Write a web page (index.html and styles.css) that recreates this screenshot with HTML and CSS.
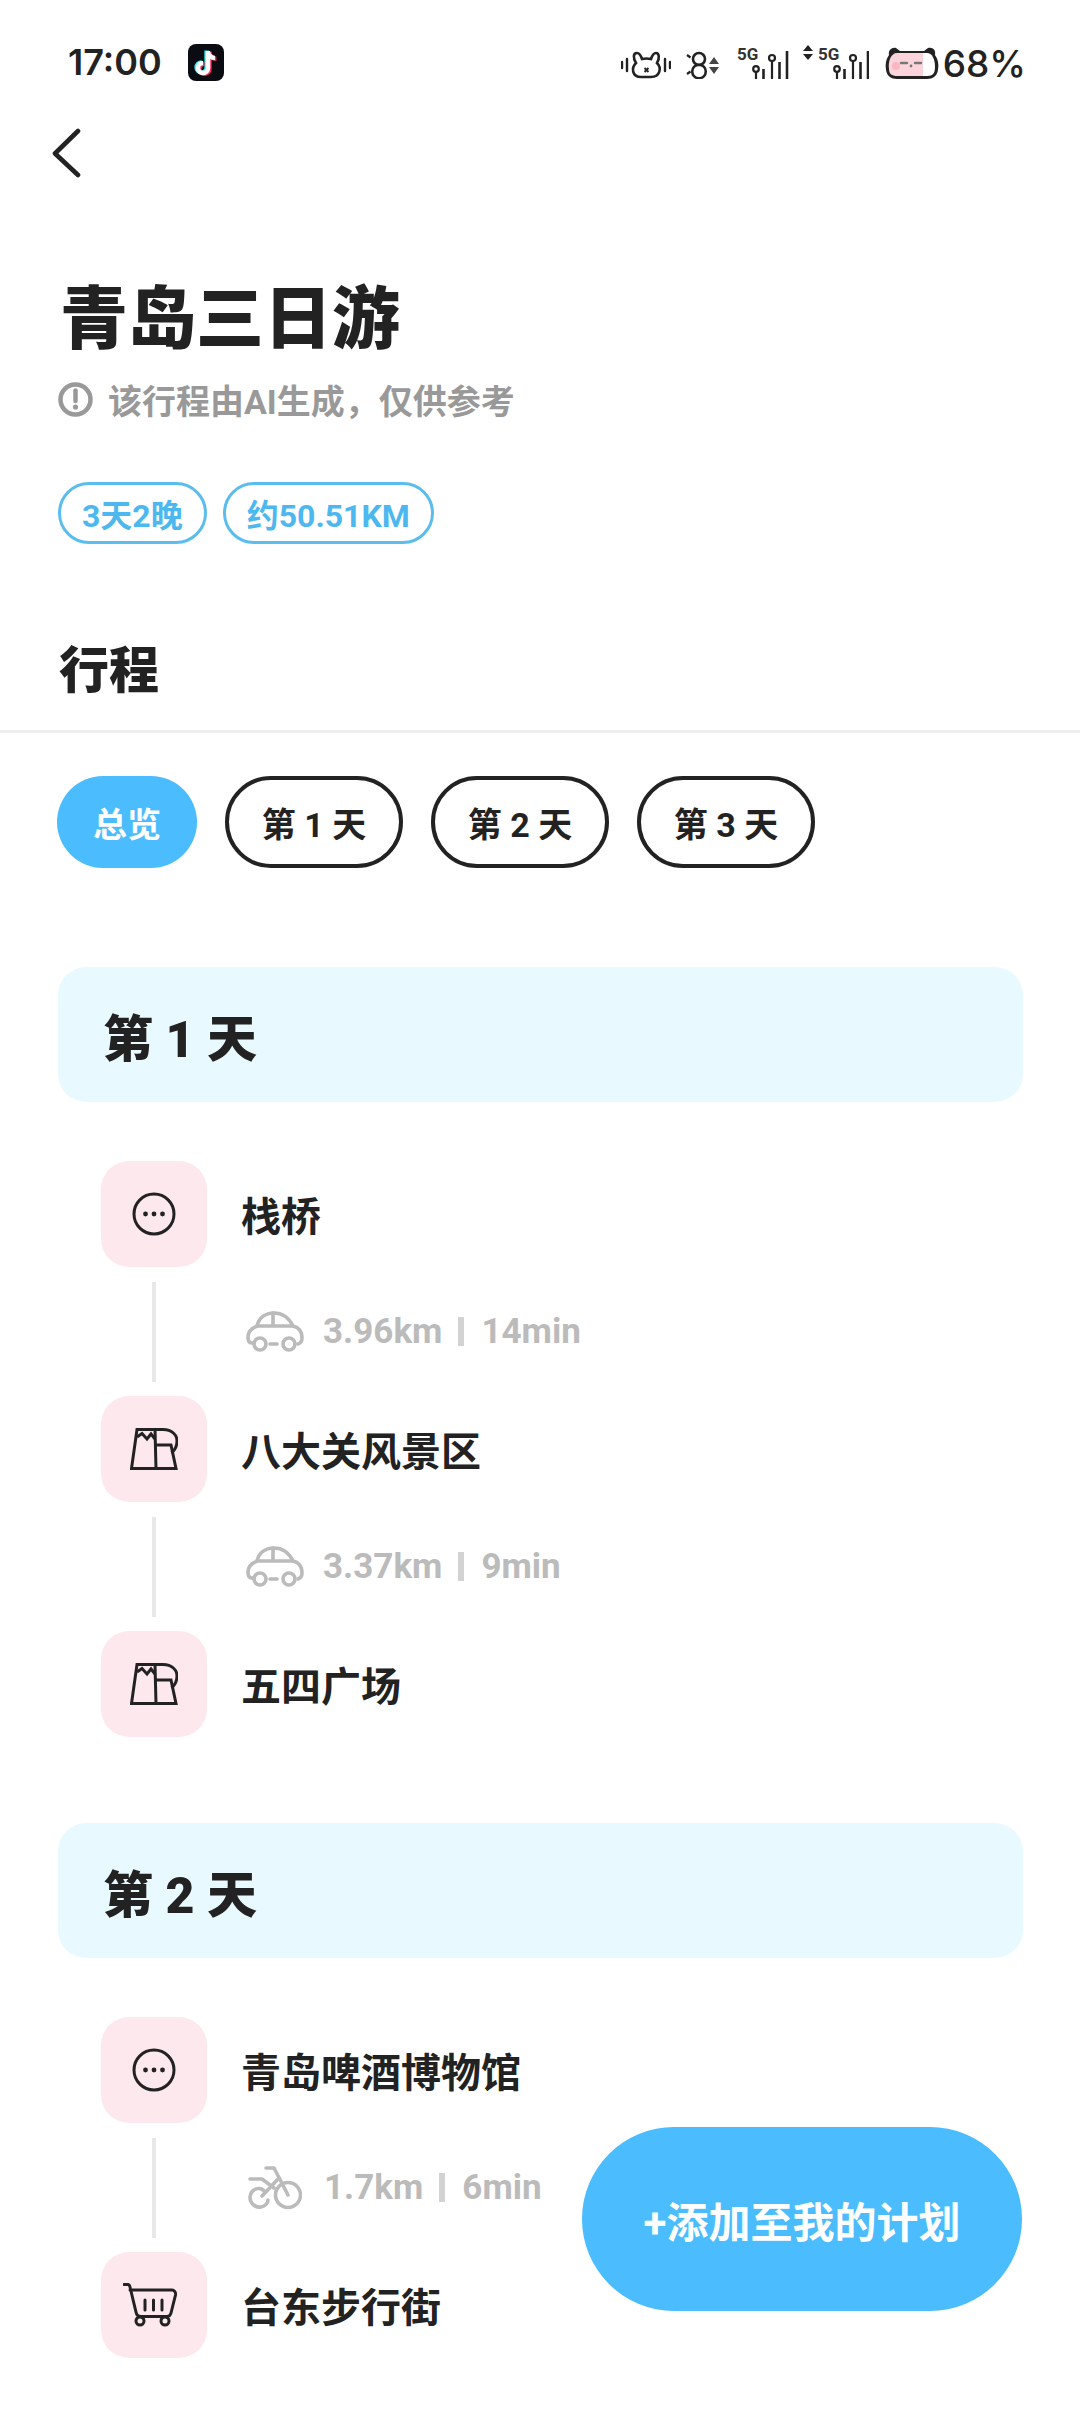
FILE: index.html
```html
<!DOCTYPE html>
<html lang="zh-CN">
<head>
<meta charset="UTF-8">
<meta name="viewport" content="width=device-width, initial-scale=1.0">
<title>青岛三日游</title>
<link rel="stylesheet" href="styles.css">
</head>
<body>
<svg class="defs" width="0" height="0">
  <symbol id="i-more" viewBox="0 0 44 44">
    <circle cx="22" cy="22" r="20" fill="none" stroke="#222" stroke-width="3"/>
    <circle cx="13.5" cy="22" r="2.4" fill="#222"/><circle cx="22" cy="22" r="2.4" fill="#222"/><circle cx="30.5" cy="22" r="2.4" fill="#222"/>
  </symbol>
  <symbol id="i-spot" viewBox="0 0 48 42">
    <g fill="none" stroke="#222" stroke-width="3">
      <path d="M7 1.5H25L26 40.5H1.5Z M22 40.5H46L41 17H25"/>
      <path d="M7 9L12 5.5L17 11L21 6L25 11"/>
      <path d="M25 1.5H33C42 1.5 47 7 47 13C47 18 45 22 41.5 25"/>
    </g>
  </symbol>
  <symbol id="i-cart" viewBox="0 0 54 44">
    <g fill="none" stroke="#222" stroke-width="3" stroke-linecap="round" stroke-linejoin="round">
      <path d="M1 1.5H5C6 1.5 6.5 2 7 4L13 29C13.5 32 15 33.5 18 33.5H44C46 33.5 47.5 32 48 30L52.5 12C53 9 51 7 49 7H7"/>
      <path d="M22 17V27M30.5 17V27M39 17V27"/>
      <circle cx="17" cy="38" r="4"/><circle cx="42" cy="38" r="4"/>
    </g>
  </symbol>
  <symbol id="i-car" viewBox="0 0 58 41">
    <g fill="none" stroke="#bbb" stroke-width="3.6" stroke-linecap="round" stroke-linejoin="round">
      <path d="M8 32H6C3 32 2 30 2 26C2 20 6 17 11 15C13 7 19 2 28 2C37 2 43 7 47 15C52 16 56 20 56 27C56 30 55 32 52 33"/>
      <path d="M11 15H47M27 2V15M24 33H31"/>
      <circle cx="14" cy="33" r="6"/><circle cx="43" cy="33" r="6"/>
    </g>
  </symbol>
  <symbol id="i-bike" viewBox="0 0 54 44">
    <g fill="none" stroke="#bbb" stroke-width="3.6" stroke-linecap="round" stroke-linejoin="round">
      <circle cx="40" cy="29" r="12.5"/>
      <path d="M18 2H26L40 29"/>
      <path d="M2 13H14L26 22M31 12L14 30"/>
      <path d="M17 26C13 20 3 22 2 31C2 38 8 42 13 41C17 40 20 37 20 34"/>
    </g>
  </symbol>
</svg>

<div class="page">
  <div class="status-bar">
    <div class="status-left">
      <span class="clock">17:00</span>
      <svg class="app-icon" viewBox="0 0 36 37">
        <rect width="36" height="37" rx="8" fill="#0b0b12"/>
        <path d="M20 7V24A5 5 0 1 1 15 19M20 8C21 12 24 14 27 14" fill="none" stroke="#25f4ee" stroke-width="4.5" transform="translate(-1.4 -.6)"/>
        <path d="M20 7V24A5 5 0 1 1 15 19M20 8C21 12 24 14 27 14" fill="none" stroke="#fe2c55" stroke-width="4.5" transform="translate(1.4 .8)"/>
        <path d="M20 7V24A5 5 0 1 1 15 19M20 8C21 12 24 14 27 14" fill="none" stroke="#fff" stroke-width="4.5"/>
      </svg>
    </div>
    <div class="status-right">
      <svg class="st-rabbit" viewBox="0 0 50 28">
        <path d="M1 11V17M6 8V20M44 8V20M49 11V17" stroke="#222" stroke-width="2.4" stroke-linecap="round"/>
        <path d="M15 12C12 7 12 2 16 2C19 2 20 5 21 8Q25.5 7 30 8C31 5 32 2 35 2C38 2 39 7 36 12C41 17 39 26 30 26H20C11 26 10 17 15 12Z" fill="none" stroke="#222" stroke-width="2.6"/>
        <path d="M23.5 17L27.5 21M27.5 17L23.5 21" stroke="#222" stroke-width="1.8"/>
      </svg>
      <svg class="st-eight" viewBox="0 0 34 28">
        <circle cx="13" cy="8" r="6" fill="none" stroke="#222" stroke-width="2.6"/>
        <circle cx="13" cy="20.5" r="6.8" fill="none" stroke="#222" stroke-width="2.6"/>
        <path d="M1 4L4.5 6.5M1 23L4.5 20.5" stroke="#222" stroke-width="2.2"/>
        <path d="M23 13L28 6L33 13ZM23 16L28 23L33 16Z" fill="#444"/>
      </svg>
      <svg class="st-signal" viewBox="0 0 54 36">
        <text class="st-5g" x="0" y="16">5G</text>
        <g fill="none" stroke="#222" stroke-width="2.2">
          <circle cx="19" cy="25" r="2.8"/><circle cx="35" cy="14" r="3"/>
          <path d="M19 28V35M35 17V35"/>
        </g>
        <path d="M26.5 25V35M42.5 18V35M50 7V35" stroke="#222" stroke-width="2.6"/>
      </svg>
      <svg class="st-signal-b" viewBox="0 0 66 36">
        <path d="M0 7L5 1L10 7ZM0 10L5 16L10 10Z" fill="#222"/>
        <text class="st-5g" x="15" y="16">5G</text>
        <g fill="none" stroke="#222" stroke-width="2.2">
          <circle cx="34" cy="25" r="2.8"/><circle cx="50" cy="14" r="3"/>
          <path d="M34 28V35M50 17V35"/>
        </g>
        <path d="M41.5 25V35M57.5 18V35M65 7V35" stroke="#222" stroke-width="2.6"/>
      </svg>
      <svg class="st-battery" viewBox="0 0 54 33">
        <path d="M4 8C3 3 7 0 11 1L15 4H39L43 1C48 0 51 3 50 8C53 12 54 17 53 23C52 29 48 32 42 32H12C6 32 2 29 1 23C0 17 1 12 4 8Z" fill="#222"/>
        <path d="M12 6H39V29H12C7 29 4 27 4 22C3 14 6 6 12 6Z" fill="#fbd3da"/>
        <path d="M38 6H42C47 6 50 12 50 20C50 26 48 29 42 29H38Z" fill="#fff"/>
        <circle cx="11" cy="19" r="4" fill="#f8b7c2"/>
        <path d="M16 16H22M30 16H36" stroke="#777" stroke-width="2.4" stroke-linecap="round"/>
        <circle cx="26" cy="19" r="1.4" fill="#777"/>
      </svg>
      <span class="battery-pct">68%</span>
    </div>
  </div>

  <div class="back-row">
    <svg class="back-icon" viewBox="0 0 30 50">
      <path d="M26 3L3 25.500L26 47" fill="none" stroke="#222" stroke-width="4.600" stroke-linecap="round" stroke-linejoin="round"/>
    </svg>
  </div>

  <h1 class="trip-title">青岛三日游</h1>
  <div class="trip-note">
    <svg class="note-icon" viewBox="0 0 35 35">
      <circle cx="17.500" cy="17.500" r="15" fill="none" stroke="#999" stroke-width="4.500"/>
      <path d="M17.500 8.500V19" stroke="#999" stroke-width="4.500" stroke-linecap="round"/>
      <circle cx="17.500" cy="25" r="2.600" fill="#999"/>
    </svg>
    <span>该行程由AI生成，仅供参考</span>
  </div>
  <div class="tags">
    <span class="tag">3天2晚</span>
    <span class="tag">约50.51KM</span>
  </div>

  <h2 class="section-title">行程</h2>
  <div class="divider"></div>

  <div class="chips">
    <span class="chip chip-active">总览</span>
    <span class="chip">第 1 天</span>
    <span class="chip">第 2 天</span>
    <span class="chip">第 3 天</span>
  </div>

  <div class="day-card first">第 1 天</div>
  <div class="stops">
    <div class="stop">
      <div class="stop-icon"><svg class="ic-more"><use href="#i-more"/></svg></div>
      <span class="stop-name">栈桥</span>
    </div>
    <div class="leg">
      <div class="leg-line"></div>
      <svg class="ic-car"><use href="#i-car"/></svg>
      <span class="leg-text">3.96km</span><span class="leg-bar"></span><span class="leg-text">14min</span>
    </div>
    <div class="stop">
      <div class="stop-icon"><svg class="ic-spot"><use href="#i-spot"/></svg></div>
      <span class="stop-name">八大关风景区</span>
    </div>
    <div class="leg">
      <div class="leg-line"></div>
      <svg class="ic-car"><use href="#i-car"/></svg>
      <span class="leg-text">3.37km</span><span class="leg-bar"></span><span class="leg-text">9min</span>
    </div>
    <div class="stop">
      <div class="stop-icon"><svg class="ic-spot"><use href="#i-spot"/></svg></div>
      <span class="stop-name">五四广场</span>
    </div>
  </div>

  <div class="day-card">第 2 天</div>
  <div class="stops">
    <div class="stop">
      <div class="stop-icon"><svg class="ic-more"><use href="#i-more"/></svg></div>
      <span class="stop-name">青岛啤酒博物馆</span>
    </div>
    <div class="leg">
      <div class="leg-line"></div>
      <svg class="ic-bike"><use href="#i-bike"/></svg>
      <span class="leg-text">1.7km</span><span class="leg-bar"></span><span class="leg-text">6min</span>
    </div>
    <div class="stop">
      <div class="stop-icon"><svg class="ic-cart"><use href="#i-cart"/></svg></div>
      <span class="stop-name">台东步行街</span>
    </div>
  </div>

  <div class="add-btn">+添加至我的计划</div>
</div>
</body>
</html>
```

FILE: styles.css
```css
* {
  box-sizing: border-box;
}
html, body {
  margin: 0;
  padding: 0;
  background: #fff;
}
.defs {
  display: none;
}
.page {
  position: relative;
  width: 1080px;
  height: 2412px;
  overflow: hidden;
  background: #fff;
  color: #222;
  font-family: Roboto, "Noto Sans CJK SC", sans-serif;
}

/* status bar */
.status-bar {
  display: flex;
  justify-content: space-between;
  align-items: center;
  height: 124px;
  padding: 0 54px 0 68px;
}
.status-left {
  display: flex;
  align-items: center;
}
.clock {
  font-family: Inter, sans-serif;
  font-size: 36px;
  font-weight: 600;
}
.app-icon {
  width: 36px;
  height: 37px;
  margin-left: 26px;
}
.status-right {
  display: flex;
  align-items: flex-end;
}
.status-right svg {
  display: block;
}
.st-rabbit {
  width: 50px;
  height: 28px;
  margin-bottom: 1px;
}
.st-eight {
  width: 34px;
  height: 28px;
  margin-left: 15px;
  margin-bottom: 1px;
}
.st-signal {
  width: 54px;
  height: 36px;
  margin-left: 17px;
}
.st-signal-b {
  width: 66px;
  height: 36px;
  margin-left: 12px;
}
.st-5g {
  font-family: Roboto, sans-serif;
  font-size: 17px;
  font-weight: 700;
  fill: #333;
}
.st-battery {
  width: 54px;
  height: 33px;
  margin-left: 16px;
}
.battery-pct {
  margin-left: 4px;
  font-family: Inter, sans-serif;
  font-size: 37px;
  font-weight: 500;
  line-height: 33px;
}

.back-row {
  height: 101px;
  padding: 4px 0 0 52px;
}
.back-icon {
  display: block;
  width: 30px;
  height: 50px;
}

/* heading */
.trip-title {
  margin: 50px 0 0 60px;
  font-size: 68px;
  font-weight: 900;
  line-height: 90px;
}
.trip-note {
  display: flex;
  align-items: center;
  height: 44px;
  margin: 12px 0 0 58px;
  color: #999;
  font-size: 34px;
  font-weight: 700;
}
.note-icon {
  width: 35px;
  height: 35px;
  margin-right: 15px;
}
.tags {
  display: flex;
  gap: 16px;
  margin: 61px 0 0 58px;
}
.tag {
  display: flex;
  align-items: center;
  height: 62px;
  padding: 0 21px;
  border: 3px solid #5bbdee;
  border-radius: 31px;
  color: #4db8f0;
  font-size: 32px;
  font-weight: 700;
}
.section-title {
  margin: 92px 0 0 59px;
  font-size: 50px;
  font-weight: 900;
  line-height: 70px;
}
.divider {
  height: 3px;
  margin-top: 24px;
  background: #eee;
}

/* day tabs */
.chips {
  display: flex;
  gap: 28px;
  padding: 43px 0 0 57px;
}
.chip {
  display: flex;
  align-items: center;
  justify-content: center;
  width: 178px;
  height: 92px;
  border: 4px solid #222;
  border-radius: 46px;
  font-size: 34px;
  font-weight: 700;
}
.chip-active {
  width: 140px;
  border: 0;
  background: #4bbcfd;
  color: #fff;
}

/* itinerary */
.day-card {
  display: flex;
  align-items: center;
  height: 135px;
  margin: 86px 57px 0 58px;
  padding-left: 45px;
  border-radius: 28px;
  background: #e8faff;
  font-size: 50px;
  font-weight: 900;
}
.day-card.first {
  margin-top: 99px;
}
.stops {
  margin: 59px 0 0 101px;
}
.stop {
  display: flex;
  align-items: center;
  height: 106px;
}
.stop-icon {
  display: flex;
  align-items: center;
  justify-content: center;
  width: 106px;
  height: 106px;
  margin-right: 34px;
  border-radius: 28px;
  background: #fde8ee;
}
.stop-name {
  font-size: 40px;
  font-weight: 700;
}
.ic-more {
  width: 44px;
  height: 44px;
}
.ic-spot {
  width: 48px;
  height: 42px;
}
.ic-cart {
  width: 54px;
  height: 44px;
  margin-right: 8px;
}
.leg {
  display: flex;
  align-items: center;
  height: 129px;
  color: #bbb;
  font-size: 35px;
  font-weight: 700;
}
.leg-line {
  width: 4px;
  height: 100px;
  margin: 0 90px 0 51px;
  background: #e8e8e8;
}
.ic-car {
  width: 58px;
  height: 41px;
  margin-right: 19px;
}
.ic-bike {
  width: 54px;
  height: 44px;
  margin: 0 22px 0 2px;
}
.leg-bar {
  width: 6px;
  height: 29px;
  margin: 0 17px 0 16px;
  background: #d2d2d2;
}

/* floating action */
.add-btn {
  position: absolute;
  left: 582px;
  top: 2127px;
  display: flex;
  align-items: center;
  justify-content: center;
  width: 440px;
  height: 184px;
  border-radius: 92px;
  background: #4bbcfd;
  color: #fff;
  font-size: 42px;
  font-weight: 700;
}
```
